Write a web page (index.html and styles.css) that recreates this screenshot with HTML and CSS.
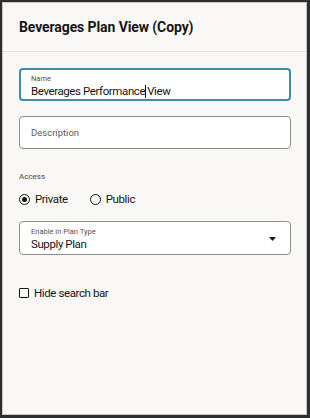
FILE: index.html
```html
<!DOCTYPE html>
<html>
<head>
<meta charset="utf-8">
<link rel="stylesheet" href="styles.css">
</head>
<body>
<div class="frame">
  <div class="panel">
    <header class="header">
      <h1 class="title">Beverages Plan View (Copy)</h1>
    </header>
    <div class="body">
      <div class="field field-focus">
        <div class="field-label">Name</div>
        <div class="field-value">Beverages Performance<span class="caret"></span>View</div>
      </div>
      <div class="field field-empty">
        <div class="placeholder">Description</div>
      </div>
      <div class="group-label">Access</div>
      <div class="radios">
        <label class="radio"><span class="radio-dot checked"></span>Private</label>
        <label class="radio"><span class="radio-dot"></span>Public</label>
      </div>
      <div class="field field-select">
        <div class="select-text">
          <div class="field-label">Enable in Plan Type</div>
          <div class="field-value">Supply Plan</div>
        </div>
        <svg class="arrow" width="7" height="4" viewBox="0 0 7 4"><path d="M0 0 L7 0 L3.5 4 Z" fill="#161513"/></svg>
      </div>
      <label class="check"><span class="box"></span>Hide search bar</label>
    </div>
  </div>
</div>
</body>
</html>
```

FILE: styles.css
```css
* { box-sizing: border-box; }
html, body { margin: 0; padding: 0; }
body {
  width: 310px;
  height: 418px;
  font-family: Roboto, "Liberation Sans", sans-serif;
  color: #161513;
  background: #fff;
}
.frame {
  width: 310px;
  height: 418px;
  border: 2px solid #2e2e2e;
  border-right-width: 3px;
  border-bottom-width: 3px;
}
.panel {
  height: 100%;
  border: 1px solid #c9c7c4;
  background: #f9f8f6;
}
.header {
  height: 49px;
  border-bottom: 1px solid #e6e4e1;
  padding: 15px 0 0 16px;
}
.title {
  margin: 0;
  font-size: 14px;
  font-weight: 700;
  line-height: 18px;
  letter-spacing: -0.1px;
}
.body {
  padding: 16px 16px 0 16px;
  display: flex;
  flex-direction: column;
}
.field {
  width: 272px;
  height: 33px;
  border: 1px solid #8f8d89;
  border-radius: 4px;
  background: #fff;
  padding: 4px 11px 0 11px;
}
.field-focus {
  border: 2px solid #3b8cad;
  padding: 4px 10px 0 10px;
}
.field-label {
  font-size: 7.5px;
  line-height: 10px;
  color: #55524e;
}
.field-value {
  font-size: 11.5px;
  line-height: 15px;
  letter-spacing: -0.4px;
  color: #161513;
  white-space: nowrap;
}
.caret {
  display: inline-block;
  width: 1px;
  height: 13px;
  background: #161513;
  vertical-align: -3px;
  margin-right: 1px;
}
.field-empty {
  margin-top: 15px;
  padding-top: 0;
  display: flex;
  align-items: center;
}
.placeholder {
  font-size: 9.5px;
  color: #5e5b57;
}
.group-label {
  margin-top: 22px;
  font-size: 8px;
  line-height: 11px;
  color: #4a4744;
}
.radios {
  margin-top: 9px;
  display: flex;
  gap: 22px;
  font-size: 11.5px;
  letter-spacing: -0.4px;
  line-height: 16px;
}
.radio {
  display: flex;
  align-items: center;
  gap: 5px;
}
.radio-dot {
  width: 11px;
  height: 11px;
  border: 1px solid #161513;
  border-radius: 50%;
  display: flex;
  align-items: center;
  justify-content: center;
}
.radio-dot.checked::after {
  content: "";
  width: 5px;
  height: 5px;
  border-radius: 50%;
  background: #161513;
}
.field-select {
  margin-top: 14px;
  height: 34px;
  display: flex;
  align-items: flex-start;
  justify-content: space-between;
  padding-top: 5px;
}
.arrow {
  margin-top: 10px;
  margin-right: 3px;
}
.check {
  margin-top: 30px;
  display: flex;
  align-items: center;
  gap: 5px;
  font-size: 11.5px;
  letter-spacing: -0.4px;
  line-height: 16px;
}
.box {
  width: 10px;
  height: 10px;
  border: 1px solid #161513;
  border-radius: 1px;
  background: #fff;
}
```
